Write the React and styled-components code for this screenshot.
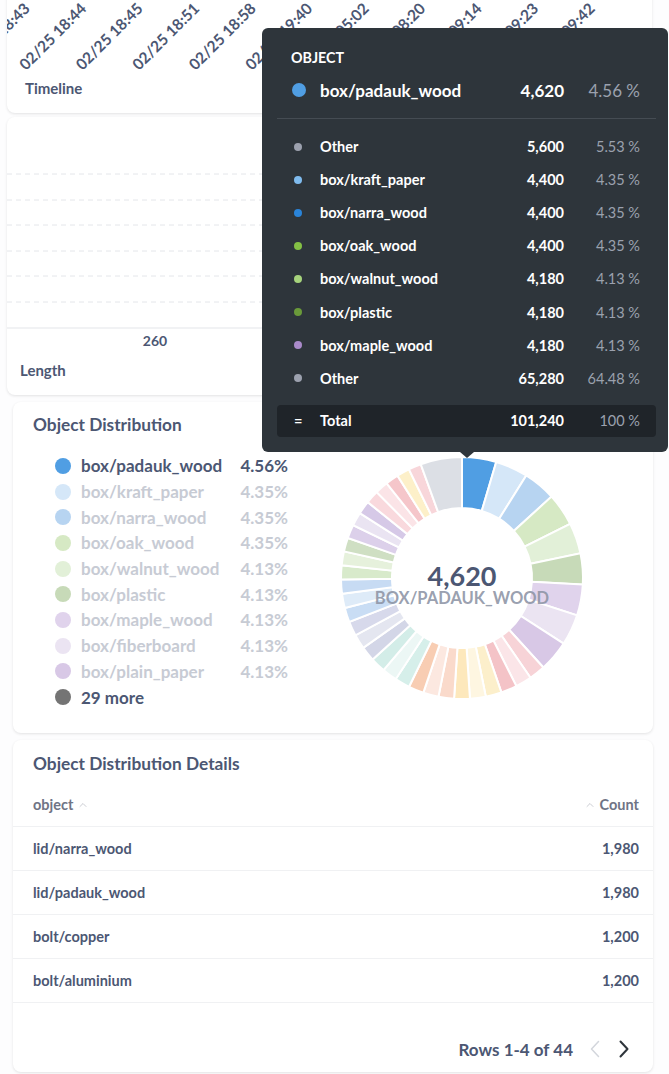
import React from 'react'
import styled, { createGlobalStyle } from 'styled-components'
import { ChevronUp } from 'lucide-react'

const GlobalStyle = createGlobalStyle`
  body {
    margin: 0;
    background: #fff;
    font-family: Lato, "Noto Sans", sans-serif;
  }
`

const Page = styled.div`
  position: relative;
  width: 669px;
  height: 1074px;
  overflow: hidden;
  background: #fdfdfe;
  display: flex;
  flex-direction: column;
`

const Card = styled.div`
  box-sizing: border-box;
  margin-left: ${p => p.$left}px;
  margin-top: ${p => p.$gap}px;
  width: ${p => p.$width}px;
  height: ${p => p.$h}px;
  flex-shrink: 0;
  background: #fff;
  border-radius: 8px;
  box-shadow: 0 1px 3px rgba(0, 0, 0, 0.11);
  display: flex;
  flex-direction: column;
`

const ChartSvg = styled.svg`
  display: block;
  flex-shrink: 0;
  text {
    font-family: Lato, sans-serif;
    font-weight: 700;
    font-size: ${p => p.$size || 14}px;
    fill: #4c5773;
  }
`

const AxisTitle = styled.div`
  padding-left: ${p => p.$pad}px;
  margin-top: ${p => p.$top || 0}px;
  font-size: 15px;
  font-weight: 700;
  line-height: 20px;
  color: #4c5773;
`

const CardTitle = styled.div`
  padding: ${p => p.$top}px 20px 0;
  font-size: 17.3px;
  font-weight: 700;
  line-height: 20px;
  color: #4c5773;
`

// tooltip ---------------------------------------------------------------
const Tooltip = styled.div`
  position: absolute;
  left: 262px;
  top: 28px;
  width: 406px;
  box-sizing: border-box;
  padding: 22px 12px 15px 15px;
  background: #2e353b;
  border-radius: 6px;
  color: #fff;
  &::after {
    content: '';
    position: absolute;
    left: 50%;
    bottom: -6px;
    margin-left: -5px;
    border-left: 7px solid transparent;
    border-right: 7px solid transparent;
    border-top: 6px solid #2e353b;
  }
`

const TipLabel = styled.div`
  padding-left: 14px;
  font-size: 14.3px;
  font-weight: 700;
  line-height: 16px;
`

const TipRow = styled.div`
  display: grid;
  grid-template-columns: 29px 1fr auto 76px;
  align-items: center;
  padding: 0 16px 0 14px;
  height: ${p => p.$h}px;
  margin-top: ${p => p.$top || 0}px;
  font-size: ${p => p.$size}px;
  background: ${p => p.$bg || 'transparent'};
  border-radius: 4px;
`

const TipDot = styled.span`
  width: ${p => p.$d}px;
  height: ${p => p.$d}px;
  border-radius: 50%;
  background: ${p => p.$c};
  margin-left: ${p => p.$ml}px;
`

const TipEq = styled.span`
  margin-left: 3px;
  font-weight: 700;
`

const TipName = styled.span`
  font-weight: 700;
  white-space: nowrap;
`

const TipValue = styled.span`
  font-weight: 700;
  text-align: right;
`

const TipPct = styled.span`
  text-align: right;
  color: #9ba1ae;
`

const TipDivider = styled.div`
  height: 1px;
  margin: 16px 0 11px;
  background: #454c53;
`

// distribution ------------------------------------------------------------
const DistBody = styled.div`
  display: flex;
  align-items: flex-start;
  margin-top: 18px;
  padding-left: 42px;
`

const Legend = styled.div`
  display: grid;
  grid-template-columns: 16px 1fr auto;
  grid-auto-rows: 25.7px;
  column-gap: 10px;
  align-items: center;
  width: 233px;
  font-size: 17px;
  font-weight: 700;
`

const LegendDot = styled.span`
  width: 16px;
  height: 16px;
  border-radius: 50%;
  background: ${p => p.$c};
`

const LegendText = styled.span`
  color: ${p => (p.$faded ? '#c7cbd4' : '#4c5773')};
  white-space: nowrap;
  text-align: ${p => (p.$right ? 'right' : 'left')};
  grid-column: ${p => (p.$span ? 'span 2' : 'auto')};
`

const Donut = styled.svg`
  display: block;
  margin: 0 0 0 49px;
  flex-shrink: 0;
  text {
    font-family: Lato, sans-serif;
    font-weight: 700;
    text-anchor: middle;
  }
`

// details table -------------------------------------------------------------
const Table = styled.div`
  margin-top: 9px;
  display: flex;
  flex-direction: column;
`

const TRow = styled.div`
  box-sizing: border-box;
  height: 44px;
  display: flex;
  align-items: center;
  justify-content: space-between;
  padding: 0 14px 0 20px;
  border-bottom: 1px solid #f0f1f3;
  font-size: 14.5px;
  font-weight: 700;
  color: ${p => (p.$head ? '#6f7485' : '#4c5773')};
`

const HeadCell = styled.span`
  display: flex;
  align-items: center;
  gap: 4px;
`

const Footer = styled.div`
  display: flex;
  justify-content: flex-end;
  align-items: center;
  padding: 34px 24px 0 0;
  height: 24px;
`

const RowsText = styled.span`
  font-size: 17px;
  font-weight: 700;
  color: #4c5773;
  margin-right: 17px;
`

const Pager = styled.svg`
  display: block;
  margin-left: ${p => p.$ml}px;
`

// data ---------------------------------------------------------------------
const ticks = [
  '02/25 18:43', '02/25 18:44', '02/25 18:45', '02/25 18:51', '02/25 18:58', '02/25 19:40',
  '02/26 05:02', '02/26 08:20', '02/26 09:14', '02/26 09:23', '02/26 09:42',
]

const tipRows = [
  { name: 'Other', value: '5,600', pct: '5.53 %', c: '#9ca1ae' },
  { name: 'box/kraft_paper', value: '4,400', pct: '4.35 %', c: '#7fbbee' },
  { name: 'box/narra_wood', value: '4,400', pct: '4.35 %', c: '#2a84d9' },
  { name: 'box/oak_wood', value: '4,400', pct: '4.35 %', c: '#84c045' },
  { name: 'box/walnut_wood', value: '4,180', pct: '4.13 %', c: '#a6d37c' },
  { name: 'box/plastic', value: '4,180', pct: '4.13 %', c: '#6a9a3a' },
  { name: 'box/maple_wood', value: '4,180', pct: '4.13 %', c: '#a98ac9' },
  { name: 'Other', value: '65,280', pct: '64.48 %', c: '#9ca1ae' },
]

const legend = [
  { name: 'box/padauk_wood', pct: '4.56%', c: '#509ee3' },
  { name: 'box/kraft_paper', pct: '4.35%', c: '#d5e7f8' },
  { name: 'box/narra_wood', pct: '4.35%', c: '#b7d4f1' },
  { name: 'box/oak_wood', pct: '4.35%', c: '#d6e9c4' },
  { name: 'box/walnut_wood', pct: '4.13%', c: '#e2f0d8' },
  { name: 'box/plastic', pct: '4.13%', c: '#c7dab8' },
  { name: 'box/maple_wood', pct: '4.13%', c: '#e0d3ec' },
  { name: 'box/fiberboard', pct: '4.13%', c: '#ebe4f2' },
  { name: 'box/plain_paper', pct: '4.13%', c: '#d8c8e6' },
]

const restColors = [
  '#f7d3d7', '#fbe5e8', '#f4c3c7', '#fcefcb', '#fef6e1', '#fde8bc', '#fadacb', '#fce8e0',
  '#f8cdb3', '#d6efea', '#ecf7f5', '#d3ede8', '#d3d6e7', '#e4e6f0', '#d7d9eb', '#c9ddf4',
  '#deebf8', '#c7dbf3', '#d8eacb', '#e6f1dc', '#cfdfc3', '#dcd0ea', '#eae4f2', '#d6c9e7',
  '#f9d9dd', '#fbe4e7', '#f5c6ca', '#fdf0c9', '#f8d6da',
]

const segments = [
  ...[4620, 4400, 4400, 4400, 4180, 4180, 4180, 4180, 4180].map((v, i) => ({ v, c: legend[i].c })),
  ...restColors.map((c, i) => ({ v: 2200 - 17 * i, c })),
  { v: 5600, c: '#dcdfe5' },
]

const tableRows = [
  ['lid/narra_wood', '1,980'],
  ['lid/padauk_wood', '1,980'],
  ['bolt/copper', '1,200'],
  ['bolt/aluminium', '1,200'],
]

const arcPath = (cx, cy, r0, r1, a0, a1) => {
  const p = (r, a) => `${cx + r * Math.sin(a)} ${cy - r * Math.cos(a)}`
  const large = a1 - a0 > Math.PI ? 1 : 0
  return `M${p(r1, a0)} A${r1} ${r1} 0 ${large} 1 ${p(r1, a1)} L${p(r0, a1)} A${r0} ${r0} 0 ${large} 0 ${p(r0, a0)} Z`
}

const DonutChart = () => {
  const total = segments.reduce((s, x) => s + x.v, 0)
  let acc = 0
  return (
    <Donut width="250" height="250" viewBox="0 0 250 250">
      {segments.map((s, i) => {
        const a0 = (acc / total) * Math.PI * 2
        acc += s.v
        const a1 = (acc / total) * Math.PI * 2
        return <path key={i} d={arcPath(125, 125, 70, 121, a0, a1)} fill={s.c} stroke="#fff" strokeWidth="2" />
      })}
      <text x="125" y="133" fontSize="27" fill="#4c5773">4,620</text>
      <text x="125" y="151" fontSize="16.5" fill="#8d94a5" fillOpacity="0.9">BOX/PADAUK_WOOD</text>
    </Donut>
  )
}

const App = () => {
  return (
    <Page>
      <GlobalStyle />

      <Card $left={7} $width={645} $gap={-10} $h={123}>
        <ChartSvg width="645" height="88" $size={15.5}>
          {ticks.map((t, i) => {
            const x = 19 + 56.5 * (i - 1)
            const y = 81
            return (
              <text key={i} x={x} y={y} transform={`rotate(-45 ${x} ${y})`}>
                {t}
              </text>
            )
          })}
        </ChartSvg>
        <AxisTitle $pad={18}>Timeline</AxisTitle>
      </Card>

      <Card $left={7} $width={645} $gap={4} $h={278}>
        <ChartSvg width="645" height="235">
          {[57, 83, 108, 134, 159, 185].map(y => (
            <line key={y} x1="0" x2="645" y1={y} y2={y} stroke="#e4e6ea" strokeDasharray="5 4" />
          ))}
          <line x1="0" x2="645" y1="211" y2="211" stroke="#eceef1" strokeWidth="1.5" />
          <text x="148" y="229" textAnchor="middle">260</text>
        </ChartSvg>
        <AxisTitle $pad={13} $top={8}>Length</AxisTitle>
      </Card>

      <Card $left={13} $width={640} $gap={7} $h={331}>
        <CardTitle $top={13}>Object Distribution</CardTitle>
        <DistBody>
          <Legend>
            {legend.map((l, i) => (
              <React.Fragment key={l.name}>
                <LegendDot $c={l.c} />
                <LegendText $faded={i > 0}>{l.name}</LegendText>
                <LegendText $faded={i > 0} $right>{l.pct}</LegendText>
              </React.Fragment>
            ))}
            <LegendDot $c="#747474" />
            <LegendText $span>29 more</LegendText>
          </Legend>
          <DonutChart />
        </DistBody>
      </Card>

      <Card $left={13} $width={640} $gap={7} $h={332}>
        <CardTitle $top={14}>Object Distribution Details</CardTitle>
        <Table>
          <TRow $head>
            <HeadCell>
              object
              <ChevronUp size={12} strokeWidth={1.5} color="#b9bcc4" />
            </HeadCell>
            <HeadCell>
              <ChevronUp size={12} strokeWidth={1.5} color="#b9bcc4" />
              Count
            </HeadCell>
          </TRow>
          {tableRows.map(([name, count]) => (
            <TRow key={name}>
              <span>{name}</span>
              <span>{count}</span>
            </TRow>
          ))}
        </Table>
        <Footer>
          <RowsText>Rows 1-4 of 44</RowsText>
          <Pager width="10" height="18" viewBox="0 0 10 18" $ml={0}>
            <polyline points="8.5,1.5 1.5,9 8.5,16.5" fill="none" stroke="#d3d6dc" strokeWidth="1.5" strokeLinecap="round" strokeLinejoin="round" />
          </Pager>
          <Pager width="10" height="18" viewBox="0 0 10 18" $ml={19}>
            <polyline points="1.5,1.5 8.5,9 1.5,16.5" fill="none" stroke="#2e353b" strokeWidth="2" strokeLinecap="round" strokeLinejoin="round" />
          </Pager>
        </Footer>
      </Card>

      <Tooltip>
        <TipLabel>OBJECT</TipLabel>
        <TipRow $h={24} $top={12} $size={17}>
          <TipDot $d={14} $c="#509ee3" $ml={1} />
          <TipName>box/padauk_wood</TipName>
          <TipValue>4,620</TipValue>
          <TipPct>4.56 %</TipPct>
        </TipRow>
        <TipDivider />
        {tipRows.map((r, i) => (
          <TipRow key={i} $h={33.1} $size={14.5}>
            <TipDot $d={8} $c={r.c} $ml={3} />
            <TipName>{r.name}</TipName>
            <TipValue>{r.value}</TipValue>
            <TipPct>{r.pct}</TipPct>
          </TipRow>
        ))}
        <TipRow $h={32} $top={10} $size={14.5} $bg="#1f2429">
          <TipEq>=</TipEq>
          <TipName>Total</TipName>
          <TipValue>101,240</TipValue>
          <TipPct>100 %</TipPct>
        </TipRow>
      </Tooltip>
    </Page>
  )
}

export default App
